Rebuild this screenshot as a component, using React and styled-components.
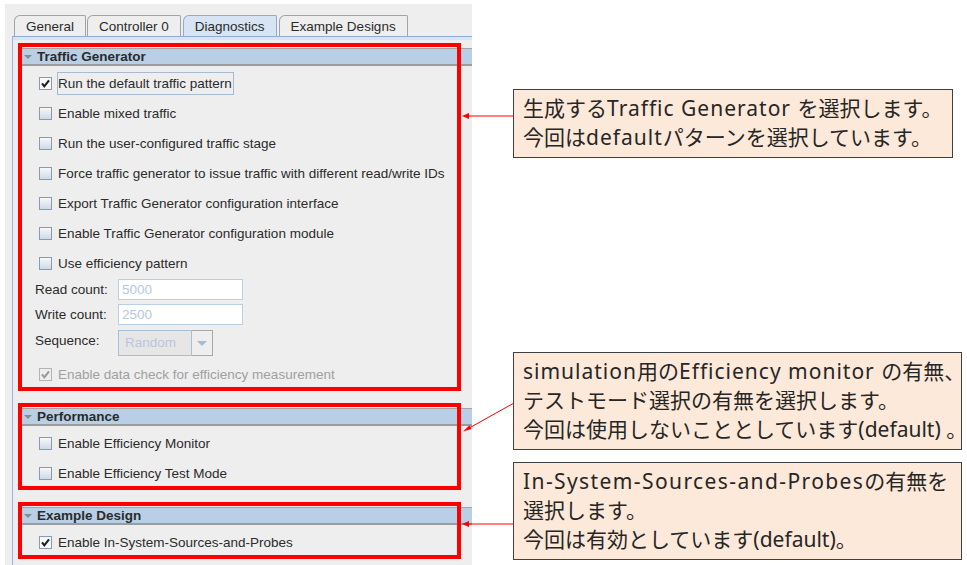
import styled, { createGlobalStyle } from 'styled-components';

const GlobalStyle = createGlobalStyle`
  html, body {
    margin: 0;
    padding: 0;
    background: #ffffff;
  }
`;

const Page = styled.div`
  width: 967px;
  height: 565px;
  overflow: hidden;
  display: flex;
  align-items: flex-start;
  background: #ffffff;
`;

const Window = styled.div`
  margin: 4px 0 0 5px;
  width: 467px;
  height: 561px;
  background: #eeeeee;
  display: flex;
  flex-direction: column;
  font-family: 'Liberation Sans', Arial, sans-serif;
  font-size: 13.5px;
  color: #2b2b2b;
`;

const TabBar = styled.div`
  display: flex;
  align-items: flex-end;
  gap: 1px;
  height: 32px;
  padding: 11px 0 0 9px;
  box-sizing: border-box;
`;

const Tab = styled.div`
  height: 21px;
  box-sizing: border-box;
  padding: 0 11px;
  margin-right: ${({ $gap }) => $gap || 0}px;
  display: flex;
  align-items: center;
  border: 1px solid ${({ $active }) => ($active ? '#8eaad8' : '#a3a3a3')};
  border-bottom: none;
  border-radius: 6px 2px 0 0;
  background: ${({ $active }) => ($active ? '#d6e4f3' : '#eeeeee')};
  color: #2b2b2b;
  white-space: nowrap;
`;

const Panel = styled.div`
  flex: 1;
  margin-left: 7px;
  border-left: 1px solid #9db3d8;
  border-top: 1px solid #8eaad8;
  display: flex;
  flex-direction: column;
`;

const TopBand = styled.div`
  height: 3px;
  background: #d6e4f3;
  margin-bottom: 3px;
`;

const Section = styled.div`
  position: relative;
  padding: 5px 0 2px 6px;
  margin-bottom: ${({ $gap }) => $gap || 0}px;
`;

const RedFrame = styled.div`
  position: absolute;
  left: 5px;
  top: 0;
  bottom: 0;
  width: 443px;
  box-sizing: border-box;
  border: 4px solid #ff0000;
  pointer-events: none;
`;

const Header = styled.div`
  height: 18px;
  box-sizing: border-box;
  border-top: 1px solid #a4a4a4;
  border-bottom: 2px solid #9c9c9c;
  background: #b9cfe6;
  display: flex;
  align-items: center;
  font-weight: bold;
  color: #2b2b2b;
`;

const Triangle = styled.span`
  width: 0;
  height: 0;
  margin: 0 5px 0 5px;
  border-left: 4px solid transparent;
  border-right: 4px solid transparent;
  border-top: 4px solid #8a8a8a;
`;

const Body = styled.div`
  padding: 2px 0 0 16px;
  display: flex;
  flex-direction: column;
`;

const Row = styled.div`
  height: 30px;
  display: flex;
  align-items: center;
  padding-left: 4px;
`;

const Box = styled.span`
  width: 13px;
  height: 13px;
  box-sizing: border-box;
  flex-shrink: 0;
  border: 1px solid ${({ $disabled }) => ($disabled ? '#b4b4b4' : '#8a9bb0')};
  background: ${({ $checked, $disabled }) =>
    $disabled ? '#eeeeee' : $checked ? '#f7f9fb' : 'linear-gradient(#f6f8fb, #cfdae6)'};
  display: flex;
  align-items: center;
  justify-content: center;
`;

const Label = styled.span`
  margin-left: 5px;
  padding: 3px 1px 3px 0;
  border: 1px solid ${({ $focused }) => ($focused ? '#a9bbd1' : 'transparent')};
  color: ${({ $disabled }) => ($disabled ? '#a0a0a0' : '#2b2b2b')};
  white-space: nowrap;
`;

const FieldRow = styled.div`
  display: flex;
  align-items: flex-start;
  margin-top: ${({ $top }) => $top || 0}px;
`;

const FieldLabel = styled.span`
  width: 83px;
  line-height: 21px;
  color: #2b2b2b;
`;

const TextInput = styled.div`
  width: 125px;
  height: 21px;
  box-sizing: border-box;
  border: 1px solid #b8cfe5;
  background: #ffffff;
  color: #b8c8dc;
  padding-left: 3px;
  line-height: 19px;
`;

const Combo = styled.div`
  width: 95px;
  height: 26px;
  display: flex;
`;

const ComboText = styled.div`
  flex: 1;
  box-sizing: border-box;
  border: 1px solid #a9bfd6;
  background: #e6e6e6;
  color: #b8c8dc;
  padding-left: 6px;
  line-height: 24px;
`;

const ComboArrow = styled.div`
  width: 21px;
  box-sizing: border-box;
  border: 1px solid #a8a8a8;
  border-left: none;
  display: flex;
  align-items: center;
  justify-content: center;

  &::after {
    content: '';
    border-left: 5px solid transparent;
    border-right: 5px solid transparent;
    border-top: 5px solid #a3bcdc;
  }
`;

const Notes = styled.div`
  margin-left: 41px;
  padding-top: 89px;
  display: flex;
  flex-direction: column;
  font-family: 'Noto Sans', 'Noto Sans CJK JP', sans-serif;
  font-size: 21px;
  line-height: 29px;
  color: #262626;
`;

const Callout = styled.div`
  position: relative;
  width: ${({ $width }) => $width}px;
  box-sizing: border-box;
  padding: 4px 9px 5px;
  margin-top: ${({ $top }) => $top || 0}px;
  border: 1px solid #404040;
  background: #fde9d9;
  white-space: nowrap;
`;

const Latin = styled.span`
  letter-spacing: ${({ $ls }) => $ls ?? 1}px;
`;

const Arrow = styled.svg`
  position: absolute;
  left: -52px;
  top: ${({ $top }) => $top}px;
  overflow: visible;
`;

function Check({ color = '#1e1e1e' }) {
  return (
    <svg width="9" height="9" viewBox="0 0 9 9">
      <path d="M1 4.4 L3.3 7.3 L8 1.3" fill="none" stroke={color} strokeWidth="2.1" />
    </svg>
  );
}

function CheckRow({ label, checked, disabled, focused }) {
  return (
    <Row>
      <Box $checked={checked} $disabled={disabled}>
        {checked && <Check color={disabled ? '#9a9a9a' : '#1e1e1e'} />}
      </Box>
      <Label $disabled={disabled} $focused={focused}>
        {label}
      </Label>
    </Row>
  );
}

function SectionBlock({ title, gap, children }) {
  return (
    <Section $gap={gap}>
      <Header>
        <Triangle />
        {title}
      </Header>
      <Body>{children}</Body>
      <RedFrame />
    </Section>
  );
}

const trafficOptions = [
  'Enable mixed traffic',
  'Run the user-configured traffic stage',
  'Force traffic generator to issue traffic with different read/write IDs',
  'Export Traffic Generator configuration interface',
  'Enable Traffic Generator configuration module',
  'Use efficiency pattern',
];

export default function App() {
  return (
    <>
      <GlobalStyle />
      <Page>
        <Window>
          <TabBar>
            <Tab>General</Tab>
            <Tab $gap={1}>Controller 0</Tab>
            <Tab $active $gap={1}>
              Diagnostics
            </Tab>
            <Tab>Example Designs</Tab>
          </TabBar>
          <Panel>
            <TopBand />
            <SectionBlock title="Traffic Generator" gap={12}>
              <CheckRow label="Run the default traffic pattern" checked focused />
              {trafficOptions.map((t) => (
                <CheckRow key={t} label={t} />
              ))}
              <FieldRow $top={1}>
                <FieldLabel>Read count:</FieldLabel>
                <TextInput>5000</TextInput>
              </FieldRow>
              <FieldRow $top={4}>
                <FieldLabel>Write count:</FieldLabel>
                <TextInput>2500</TextInput>
              </FieldRow>
              <FieldRow $top={5}>
                <FieldLabel>Sequence:</FieldLabel>
                <Combo>
                  <ComboText>Random</ComboText>
                  <ComboArrow />
                </Combo>
              </FieldRow>
              <div style={{ height: 3 }} />
              <CheckRow label="Enable data check for efficiency measurement" checked disabled />
            </SectionBlock>
            <SectionBlock title="Performance" gap={12}>
              <CheckRow label="Enable Efficiency Monitor" />
              <CheckRow label="Enable Efficiency Test Mode" />
            </SectionBlock>
            <SectionBlock title="Example Design">
              <CheckRow label="Enable In-System-Sources-and-Probes" checked />
            </SectionBlock>
          </Panel>
        </Window>

        <Notes>
          <Callout $width={440}>
            生成する<Latin>Traffic Generator </Latin>を選択します。
            <br />
            今回は<Latin>default</Latin>パターンを選択しています。
            <Arrow $top={21} width="52" height="10">
              <line x1="52" y1="5" x2="6" y2="5" stroke="#ff0000" strokeWidth="1" />
              <polygon points="0,5 7,2 7,8" fill="#ff0000" />
            </Arrow>
          </Callout>
          <Callout $width={449} $top={194}>
            <Latin>simulation</Latin>用の<Latin>Efficiency monitor </Latin>の有無、
            <br />
            テストモード選択の有無を選択します。
            <br />
            今回は使用しないこととしています(default) 。
            <Arrow $top={45} width="52" height="40">
              <line x1="52" y1="5" x2="6" y2="30.7" stroke="#ff0000" strokeWidth="1" />
              <polygon points="1,33.5 7.5,27.2 9.5,30.9" fill="#ff0000" />
            </Arrow>
          </Callout>
          <Callout $width={449} $top={12}>
            <Latin $ls={1.4}>In-System-Sources-and-Probes</Latin>の有無を
            <br />
            選択します。
            <br />
            今回は有効としています(default)。
            <Arrow $top={56} width="52" height="10">
              <line x1="52" y1="5" x2="6" y2="5" stroke="#ff0000" strokeWidth="1" />
              <polygon points="0,5 7,2 7,8" fill="#ff0000" />
            </Arrow>
          </Callout>
        </Notes>
      </Page>
    </>
  );
}
